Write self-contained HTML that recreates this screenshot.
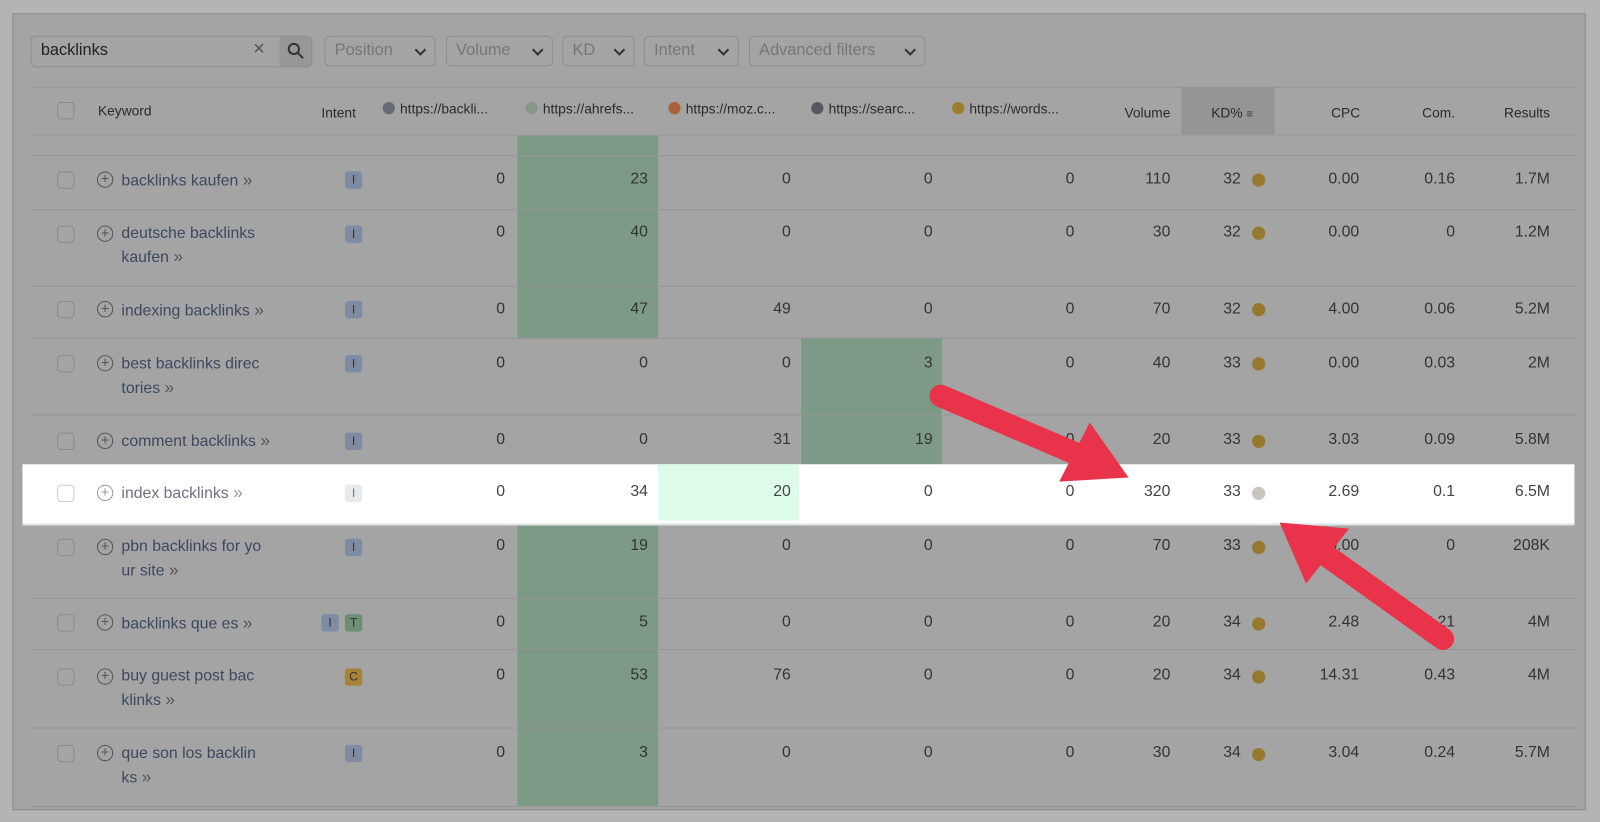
<!DOCTYPE html>
<html><head><meta charset="utf-8"><style>
html,body{margin:0;padding:0;width:1600px;height:822px;overflow:hidden;background:#b4b4b4;font-family:"Liberation Sans",sans-serif}
#w{position:absolute;left:0;top:0;width:1568px;height:806px;transform:scale(1.0204);transform-origin:0 0}
.panel{position:absolute;left:12px;top:13px;width:1540px;height:779px;background:#a4a4a4;border:1px solid #8e8e8e}
.a{position:absolute;white-space:nowrap}
.t{font-size:15.5px;color:#333;line-height:18px}
.btn{position:absolute;top:35px;height:30px;border:1px solid #8d8d8d;border-radius:5px;color:#777;font-size:16px;line-height:28px;padding-left:9px;box-sizing:border-box}
.btn i{position:absolute;right:10px;top:9px;width:6px;height:6px;border-right:2px solid #333;border-bottom:2px solid #333;transform:rotate(45deg)}
.line{position:absolute;left:30px;width:1515px;height:1px;background:#959595}
.g{position:absolute;background:#7c9a85}
.cb{position:absolute;left:56px;width:17px;height:17px;border:1px solid #8a8a8a;border-radius:4px;box-sizing:border-box}
.kw{position:absolute;left:119px;font-size:15.5px;color:#3d4860;line-height:23px}
.kw span,.kw b{font-weight:normal;color:#555;font-size:17px}
.pl{position:absolute;left:95px;width:16px;height:16px;border:1.5px solid #555;border-radius:50%;box-sizing:border-box;font-size:14px;line-height:12px;text-align:center;color:#555}
.bd{position:absolute;width:17px;height:17px;border-radius:3px;background:#7d8ca3;color:#333;font-size:12px;text-align:center;line-height:17px}
.dot{position:absolute;left:1227px;width:13px;height:13px;border-radius:50%;background:#96792f}
.hd{font-size:13.5px;color:#2a2a2a}
.hdot{display:inline-block;width:12px;height:12px;border-radius:50%;vertical-align:-1px;margin-right:5px}
</style></head><body><div id="w">
<div class="panel"></div>
<div style="position:absolute;left:30px;top:35px;width:276px;height:31px;border:1px solid #8d8d8d;border-radius:5px;box-sizing:border-box"></div>
<div style="position:absolute;left:274px;top:36px;width:31px;height:29px;background:#979797;border-radius:0 4px 4px 0"></div>
<div class="a" style="left:40px;top:41px;font-size:16px;color:#222">backlinks</div>
<div class="a" style="left:248px;top:37px;font-size:20px;color:#555">×</div>
<svg class="a" style="left:281px;top:41px" width="18" height="18"><circle cx="7" cy="7" r="5" fill="none" stroke="#333" stroke-width="2"/><line x1="11" y1="11" x2="16" y2="16" stroke="#333" stroke-width="2"/></svg>
<div class="btn" style="left:318px;width:109px">Position<i></i></div>
<div class="btn" style="left:437px;width:105px">Volume<i></i></div>
<div class="btn" style="left:551px;width:71px">KD<i></i></div>
<div class="btn" style="left:631px;width:93px">Intent<i></i></div>
<div class="btn" style="left:734px;width:173px">Advanced filters<i></i></div>
<div class="line" style="top:85px"></div>
<div style="position:absolute;left:1158px;top:86px;width:91px;height:46px;background:#959595"></div>
<div class="cb" style="top:100px"></div>
<div class="a hd" style="left:96px;top:101px">Keyword</div>
<div class="a hd" style="left:315px;top:103px">Intent</div>
<div class="a hd" style="left:375px;top:99px"><span class="hdot" style="background:#666c77"></span>https://backli...</div>
<div class="a hd" style="left:515px;top:99px"><span class="hdot" style="background:#849889"></span>https://ahrefs...</div>
<div class="a hd" style="left:655px;top:99px"><span class="hdot" style="background:#a7623a"></span>https://moz.c...</div>
<div class="a hd" style="left:795px;top:99px"><span class="hdot" style="background:#56585f"></span>https://searc...</div>
<div class="a hd" style="left:933px;top:99px"><span class="hdot" style="background:#9a7e2c"></span>https://words...</div>
<div class="a hd" style="right:421px;top:103px">Volume</div>
<div class="a hd" style="left:1187px;top:103px">KD% <span style="font-size:11px">≡</span></div>
<div class="a hd" style="right:235px;top:103px">CPC</div>
<div class="a hd" style="right:142px;top:103px">Com.</div>
<div class="a hd" style="right:49px;top:103px">Results</div>
<div class="line" style="top:132px;background:#9a9a9a"></div>
<div class="g" style="left:507px;top:133px;width:138px;height:198px"></div>
<div class="g" style="left:507px;top:510px;width:138px;height:280px"></div>
<div class="g" style="left:785px;top:331px;width:138px;height:124px"></div>
<div class="line" style="top:152px"></div><div class="line" style="top:205px"></div><div class="line" style="top:280px"></div><div class="line" style="top:331px"></div><div class="line" style="top:406px"></div><div class="line" style="top:586px"></div><div class="line" style="top:636px"></div><div class="line" style="top:713px"></div><div class="line" style="top:790px"></div>
<div style="position:absolute;left:22px;top:455px;width:1521px;height:60px;background:#fff;border-bottom:2px solid #dfe3e6;box-sizing:border-box"></div>
<div style="position:absolute;left:645px;top:455px;width:138px;height:55px;background:#dcfbe8"></div>

<div class="cb" style="top:168px"></div><div class="pl" style="top:168px">+</div><div class="kw" style="top:165px">backlinks kaufen <span>»</span></div><div class="bd" style="left:338px;top:168px">I</div>
<div class="a t" style="right:1073px;top:167px">0</div><div class="a t" style="right:933px;top:167px">23</div><div class="a t" style="right:793px;top:167px">0</div><div class="a t" style="right:654px;top:167px">0</div><div class="a t" style="right:515px;top:167px">0</div><div class="a t" style="right:421px;top:167px">110</div><div class="a t" style="right:352px;top:167px">32</div><div class="dot" style="top:170px"></div><div class="a t" style="right:236px;top:167px">0.00</div><div class="a t" style="right:142px;top:167px">0.16</div><div class="a t" style="right:49px;top:167px">1.7M</div>

<div class="cb" style="top:221px"></div><div class="pl" style="top:221px">+</div><div class="kw" style="top:217px">deutsche backlinks<br>kaufen <span>»</span></div><div class="bd" style="left:338px;top:221px">I</div>
<div class="a t" style="right:1073px;top:219px">0</div><div class="a t" style="right:933px;top:219px">40</div><div class="a t" style="right:793px;top:219px">0</div><div class="a t" style="right:654px;top:219px">0</div><div class="a t" style="right:515px;top:219px">0</div><div class="a t" style="right:421px;top:219px">30</div><div class="a t" style="right:352px;top:219px">32</div><div class="dot" style="top:222px"></div><div class="a t" style="right:236px;top:219px">0.00</div><div class="a t" style="right:142px;top:219px">0</div><div class="a t" style="right:49px;top:219px">1.2M</div>

<div class="cb" style="top:295px"></div><div class="pl" style="top:295px">+</div><div class="kw" style="top:292px">indexing backlinks <span>»</span></div><div class="bd" style="left:338px;top:295px">I</div>
<div class="a t" style="right:1073px;top:294px">0</div><div class="a t" style="right:933px;top:294px">47</div><div class="a t" style="right:793px;top:294px">49</div><div class="a t" style="right:654px;top:294px">0</div><div class="a t" style="right:515px;top:294px">0</div><div class="a t" style="right:421px;top:294px">70</div><div class="a t" style="right:352px;top:294px">32</div><div class="dot" style="top:297px"></div><div class="a t" style="right:236px;top:294px">4.00</div><div class="a t" style="right:142px;top:294px">0.06</div><div class="a t" style="right:49px;top:294px">5.2M</div>

<div class="cb" style="top:348px"></div><div class="pl" style="top:348px">+</div><div class="kw" style="top:345px">best backlinks direc<br>tories <span>»</span></div><div class="bd" style="left:338px;top:348px">I</div>
<div class="a t" style="right:1073px;top:347px">0</div><div class="a t" style="right:933px;top:347px">0</div><div class="a t" style="right:793px;top:347px">0</div><div class="a t" style="right:654px;top:347px">3</div><div class="a t" style="right:515px;top:347px">0</div><div class="a t" style="right:421px;top:347px">40</div><div class="a t" style="right:352px;top:347px">33</div><div class="dot" style="top:350px"></div><div class="a t" style="right:236px;top:347px">0.00</div><div class="a t" style="right:142px;top:347px">0.03</div><div class="a t" style="right:49px;top:347px">2M</div>

<div class="cb" style="top:424px"></div><div class="pl" style="top:424px">+</div><div class="kw" style="top:420px">comment backlinks <span>»</span></div><div class="bd" style="left:338px;top:424px">I</div>
<div class="a t" style="right:1073px;top:422px">0</div><div class="a t" style="right:933px;top:422px">0</div><div class="a t" style="right:793px;top:422px">31</div><div class="a t" style="right:654px;top:422px">19</div><div class="a t" style="right:515px;top:422px">0</div><div class="a t" style="right:421px;top:422px">20</div><div class="a t" style="right:352px;top:422px">33</div><div class="dot" style="top:426px"></div><div class="a t" style="right:236px;top:422px">3.03</div><div class="a t" style="right:142px;top:422px">0.09</div><div class="a t" style="right:49px;top:422px">5.8M</div>

<div class="cb" style="top:475px;border-color:#ccc"></div><div class="pl" style="top:475px;border-color:#999;color:#999">+</div><div class="kw" style="top:471px;color:#6b7280">index backlinks <span style="color:#999">»</span></div><div class="bd" style="left:338px;top:475px;background:#e6eaec;color:#777">I</div>
<div class="a t" style="right:1073px;top:473px;color:#444">0</div><div class="a t" style="right:933px;top:473px;color:#444">34</div><div class="a t" style="right:793px;top:473px;color:#444">20</div><div class="a t" style="right:654px;top:473px;color:#444">0</div><div class="a t" style="right:515px;top:473px;color:#444">0</div><div class="a t" style="right:421px;top:473px;color:#444">320</div><div class="a t" style="right:352px;top:473px;color:#444">33</div><div class="dot" style="top:477px;background:#c8c5bf"></div><div class="a t" style="right:236px;top:473px;color:#444">2.69</div><div class="a t" style="right:142px;top:473px;color:#444">0.1</div><div class="a t" style="right:49px;top:473px;color:#444">6.5M</div>

<div class="cb" style="top:528px"></div><div class="pl" style="top:528px">+</div><div class="kw" style="top:524px">pbn backlinks for yo<br>ur site <span>»</span></div><div class="bd" style="left:338px;top:528px">I</div>
<div class="a t" style="right:1073px;top:526px">0</div><div class="a t" style="right:933px;top:526px">19</div><div class="a t" style="right:793px;top:526px">0</div><div class="a t" style="right:654px;top:526px">0</div><div class="a t" style="right:515px;top:526px">0</div><div class="a t" style="right:421px;top:526px">70</div><div class="a t" style="right:352px;top:526px">33</div><div class="dot" style="top:530px"></div><div class="a t" style="right:236px;top:526px">0.00</div><div class="a t" style="right:142px;top:526px">0</div><div class="a t" style="right:49px;top:526px">208K</div>

<div class="cb" style="top:602px"></div><div class="pl" style="top:602px">+</div><div class="kw" style="top:599px">backlinks que es <span>»</span></div><div class="bd" style="left:315px;top:602px">I</div><div class="bd" style="left:338px;top:602px;background:#6a8f75">T</div>
<div class="a t" style="right:1073px;top:601px">0</div><div class="a t" style="right:933px;top:601px">5</div><div class="a t" style="right:793px;top:601px">0</div><div class="a t" style="right:654px;top:601px">0</div><div class="a t" style="right:515px;top:601px">0</div><div class="a t" style="right:421px;top:601px">20</div><div class="a t" style="right:352px;top:601px">34</div><div class="dot" style="top:605px"></div><div class="a t" style="right:236px;top:601px">2.48</div><div class="a t" style="right:142px;top:601px">0.21</div><div class="a t" style="right:49px;top:601px">4M</div>

<div class="cb" style="top:655px"></div><div class="pl" style="top:655px">+</div><div class="kw" style="top:651px">buy guest post bac<br>klinks <span>»</span></div><div class="bd" style="left:338px;top:655px;background:#a6823a">C</div>
<div class="a t" style="right:1073px;top:653px">0</div><div class="a t" style="right:933px;top:653px">53</div><div class="a t" style="right:793px;top:653px">76</div><div class="a t" style="right:654px;top:653px">0</div><div class="a t" style="right:515px;top:653px">0</div><div class="a t" style="right:421px;top:653px">20</div><div class="a t" style="right:352px;top:653px">34</div><div class="dot" style="top:657px"></div><div class="a t" style="right:236px;top:653px">14.31</div><div class="a t" style="right:142px;top:653px">0.43</div><div class="a t" style="right:49px;top:653px">4M</div>

<div class="cb" style="top:730px"></div><div class="pl" style="top:730px">+</div><div class="kw" style="top:727px">que son los backlin<br>ks <span>»</span></div><div class="bd" style="left:338px;top:730px">I</div>
<div class="a t" style="right:1073px;top:729px">0</div><div class="a t" style="right:933px;top:729px">3</div><div class="a t" style="right:793px;top:729px">0</div><div class="a t" style="right:654px;top:729px">0</div><div class="a t" style="right:515px;top:729px">0</div><div class="a t" style="right:421px;top:729px">30</div><div class="a t" style="right:352px;top:729px">34</div><div class="dot" style="top:733px"></div><div class="a t" style="right:236px;top:729px">3.04</div><div class="a t" style="right:142px;top:729px">0.24</div><div class="a t" style="right:49px;top:729px">5.7M</div>
<svg class="a" style="left:0;top:0" width="1568" height="806">
<line x1="922" y1="388" x2="1060" y2="447" stroke="#e8334a" stroke-width="22" stroke-linecap="round"/>
<polygon points="1038,472 1106,468 1068,414" fill="#e8334a"/>
<line x1="1414" y1="626" x2="1295" y2="541" stroke="#e8334a" stroke-width="22" stroke-linecap="round"/>
<polygon points="1254,512 1280,572 1322,518" fill="#e8334a"/>
</svg>
</div></body></html>
